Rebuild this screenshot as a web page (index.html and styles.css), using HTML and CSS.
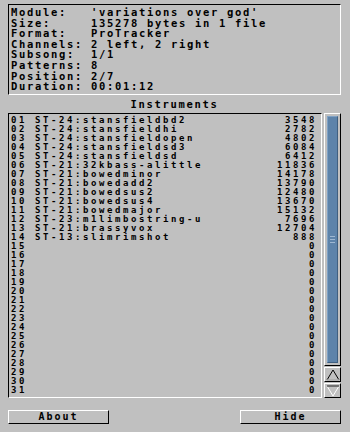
FILE: index.html
```html
<!DOCTYPE html>
<html lang="en">
<head>
  <meta charset="UTF-8">
  <title>Module Info</title>
  <link rel="stylesheet" href="styles.css">
</head>
<body>
  <div id="window">
    <div id="info">
      <div class="line"><span class="key">Module:</span><span>'variations over god'</span></div>
      <div class="line"><span class="key">Size:</span><span>135278 bytes in 1 file</span></div>
      <div class="line"><span class="key">Format:</span><span>ProTracker</span></div>
      <div class="line"><span class="key">Channels:</span><span>2 left, 2 right</span></div>
      <div class="line"><span class="key">Subsong:</span><span>1/1</span></div>
      <div class="line"><span class="key">Patterns:</span><span>8</span></div>
      <div class="line"><span class="key">Position:</span><span>2/7</span></div>
      <div class="line"><span class="key">Duration:</span><span>00:01:12</span></div>
    </div>

    <div id="caption">Instruments</div>

    <div id="lists">
      <ul id="instruments"></ul>
      <div id="scroll">
        <div id="track">
          <div id="thumb"><span class="grip"></span></div>
        </div>
        <span class="arrow">
          <svg width="14" height="12" viewBox="0 0 14 12"><path d="M7 1 L13 11 L1 11 Z" fill="none" stroke="#000" stroke-width="1"/><path d="M1 11 L13 11" stroke="#fff"/></svg>
        </span>
        <span class="arrow">
          <svg width="14" height="12" viewBox="0 0 14 12"><path d="M1 1 L13 1 L7 11 Z" fill="none" stroke="#fff" stroke-width="1"/><path d="M1 1 L13 1" stroke="#000"/></svg>
        </span>
      </div>
    </div>

    <div id="buttons">
      <span class="btn">About</span>
      <span class="btn">Hide</span>
    </div>
  </div>

  <script src="app.js"></script>
</body>
</html>
```

FILE: styles.css
```css
*{
  margin: 0;
  padding: 0;
}
body{
  background: #c0c0c0;
  color: #000;
  font-family: "DejaVu Sans Mono", "Liberation Mono", monospace;
  font-weight: bold;
}
#window{
  width: 350px;
  height: 432px;
  padding: 4px 9px 0 8px;
  box-sizing: border-box;
}

#info{
  height: 91px;
  box-sizing: border-box;
  padding: 2px 0 0 2px;
  border-top: 1px solid #000;
  border-left: 1px solid #000;
  border-right: 1px solid #fff;
  border-bottom: 1px solid #fff;
  font-size: 10.5px;
  letter-spacing: 1.68px;
  line-height: 10.6px;
}
#info .line{
  display: flex;
  white-space: pre;
}
#info .key{
  width: 80px;
  flex: none;
}

#caption{
  height: 18px;
  line-height: 18px;
  text-align: center;
  font-size: 10.5px;
  letter-spacing: 1.68px;
}

#lists{
  display: flex;
  gap: 2px;
  height: 285px;
}

#instruments{
  width: 314px;
  box-sizing: border-box;
  padding: 2px 4px 0 2px;
  border-top: 1px solid #000;
  border-left: 1px solid #000;
  border-right: 1px solid #fff;
  border-bottom: 1px solid #fff;
  list-style: none;
  font-size: 9px;
  letter-spacing: 2.58px;
  line-height: 9px;
  overflow: hidden;
}
#instruments>li{
  display: flex;
  justify-content: space-between;
  height: 9px;
  white-space: pre;
}

#scroll{
  width: 17px;
  display: flex;
  flex-direction: column;
  gap: 1px;
}
#track{
  flex: 1;
  border-top: 1px solid #fff;
  border-left: 1px solid #fff;
  border-right: 1px solid #000;
  border-bottom: 1px solid #000;
  padding: 2px;
  display: flex;
  flex-direction: column;
}
#thumb{
  height: 247px;
  box-sizing: border-box;
  background: #5d83aa;
  border-left: 1px solid #7fa1c4;
  border-top: 1px solid #7fa1c4;
  border-right: 1px solid #3f5f80;
  border-bottom: 1px solid #3f5f80;
  display: flex;
  align-items: center;
  justify-content: center;
}
.grip{
  width: 5px;
  height: 5px;
  border-top: 1px solid #9fb8d2;
  border-bottom: 1px solid #9fb8d2;
  background: linear-gradient(#5d83aa 2px, #9fb8d2 2px, #9fb8d2 3px, #5d83aa 3px);
}
.arrow{
  height: 15px;
  box-sizing: border-box;
  border-top: 1px solid #fff;
  border-left: 1px solid #fff;
  border-right: 1px solid #000;
  border-bottom: 1px solid #000;
  display: flex;
  align-items: center;
  justify-content: center;
}

#buttons{
  display: flex;
  justify-content: space-between;
  margin-top: 12px;
}
.btn{
  width: 101px;
  height: 14px;
  box-sizing: border-box;
  border-top: 1px solid #fff;
  border-left: 1px solid #fff;
  border-right: 1px solid #000;
  border-bottom: 1px solid #000;
  text-align: center;
  font-size: 10px;
  letter-spacing: 1.98px;
  line-height: 12px;
}
```

FILE: app.js
```js
var names = [
  ['ST-24:stansfieldbd2', 3548],
  ['ST-24:stansfieldhi', 2782],
  ['ST-24:stansfieldopen', 4802],
  ['ST-24:stansfieldsd3', 6084],
  ['ST-24:stansfieldsd', 6412],
  ['ST-21:32kbass-alittle', 11836],
  ['ST-21:bowedminor', 14178],
  ['ST-21:bowedadd2', 13790],
  ['ST-21:bowedsus2', 12480],
  ['ST-21:bowedsus4', 13670],
  ['ST-21:bowedmajor', 15132],
  ['ST-23:m1limbostring-u', 7696],
  ['ST-21:brassyvox', 12704],
  ['ST-13:slimrimshot', 888]
];

var oList = document.getElementById('instruments');

for(var i=1; i<=31; i++) {
  var item = names[i-1] || ['', 0];
  var num = i < 10 ? '0' + i : '' + i;
  var oLi = document.createElement('li');
  var oName = document.createElement('span');
  var oSize = document.createElement('span');
  oName.textContent = num + ' ' + item[0];
  oSize.textContent = item[1];
  oLi.appendChild(oName);
  oLi.appendChild(oSize);
  oList.appendChild(oLi);
}
```
